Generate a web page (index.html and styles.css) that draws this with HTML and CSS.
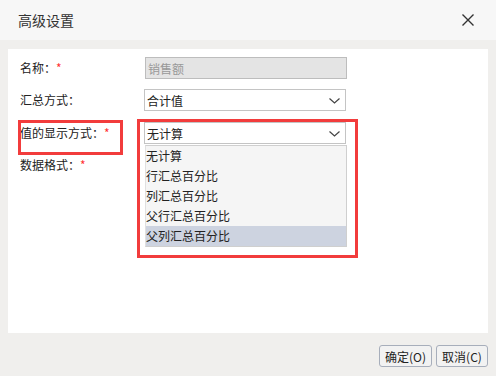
FILE: index.html
```html
<!DOCTYPE html>
<html lang="zh-CN">
<head>
    <meta charset="UTF-8">
    <title>高级设置</title>
    <link rel="stylesheet" href="styles.css">
</head>
<body>
    <div class="dialog">
        <div class="title-bar">
            <span class="title">高级设置</span>
            <svg class="close" width="14" height="14" viewBox="0 0 14 14">
                <path d="M1.5 1.5 L12.5 12.5 M12.5 1.5 L1.5 12.5" stroke="#333" stroke-width="1.4" fill="none"/>
            </svg>
        </div>

        <div class="body">
            <div class="panel">
                <div class="row">
                    <label class="label">名称：<span class="req">*</span></label>
                    <div class="field input disabled">销售额</div>
                </div>
                <div class="row">
                    <label class="label">汇总方式：</label>
                    <div class="field select">
                        <span>合计值</span>
                        <svg class="caret" width="11" height="6" viewBox="0 0 11 6"><path d="M0.5 0.5 L5.5 5 L10.5 0.5" stroke="#444" stroke-width="1.2" fill="none"/></svg>
                    </div>
                </div>
                <div class="row">
                    <label class="label marked">值的显示方式：<span class="req">*</span></label>
                    <div class="combo">
                        <div class="field select">
                            <span>无计算</span>
                            <svg class="caret" width="11" height="6" viewBox="0 0 11 6"><path d="M0.5 0.5 L5.5 5 L10.5 0.5" stroke="#444" stroke-width="1.2" fill="none"/></svg>
                        </div>
                        <ul class="dropdown">
                            <li>无计算</li>
                            <li>行汇总百分比</li>
                            <li>列汇总百分比</li>
                            <li>父行汇总百分比</li>
                            <li class="active">父列汇总百分比</li>
                        </ul>
                    </div>
                </div>
                <div class="row">
                    <label class="label">数据格式：<span class="req">*</span></label>
                </div>
            </div>

            <div class="footer">
                <button class="btn">确定(O)</button>
                <button class="btn">取消(C)</button>
            </div>
        </div>
    </div>
</body>
</html>
```

FILE: styles.css
```css
* { margin: 0; padding: 0; box-sizing: border-box; }
body {
    font-family: "Noto Sans CJK SC", "Noto Sans", sans-serif;
    font-size: 12px;
    color: #222;
    background: #f0efed;
    width: 496px;
    height: 376px;
    overflow: hidden;
}
.title-bar {
    height: 40px;
    background: #f7f7f7;
    display: flex;
    align-items: center;
    justify-content: space-between;
    padding: 0 21px 0 18px;
}
.title {
    font-size: 14px;
    color: #333;
}
.body {
    padding: 9px 8px 0;
}
.panel {
    background: #fff;
    height: 284px;
    padding: 8px 12px;
    display: flex;
    flex-direction: column;
    gap: 10px;
}
.row {
    display: flex;
    align-items: center;
    height: 22px;
}
.row:nth-child(3) { margin-top: 1px; }
.label {
    width: 124px;
    flex: none;
    position: relative;
    line-height: 22px;
}
.req { color: #f33; }
.label.marked::after {
    content: "";
    position: absolute;
    left: -2px;
    top: -2px;
    width: 99px;
    height: 29px;
    border: 3px solid #f23c3c;
}
.field {
    width: 202px;
    height: 22px;
    border: 1px solid #c4c4c4;
    display: flex;
    align-items: center;
    padding-left: 2px;
    background: #fff;
}
.field.disabled {
    background: #e4e4e4;
    border-color: #bdbdbd;
    color: #999;
    margin-left: 1px;
}
.select {
    justify-content: space-between;
    padding-right: 5px;
}
.caret { margin-top: 1px; }
.combo {
    position: relative;
    width: 202px;
}
.combo::after {
    content: "";
    position: absolute;
    left: -7px;
    top: -3px;
    width: 215px;
    height: 133px;
    border: 3px solid #f23c3c;
}
.dropdown {
    position: absolute;
    left: 1px;
    top: 23px;
    width: 202px;
    list-style: none;
    background: #f5f5f5;
    border: 1px solid #cfcfcf;
    border-left-color: #e0e0e0;
}
.dropdown li {
    height: 20px;
    line-height: 20px;
}
.dropdown li.active { background: #cdd3e0; }
.footer {
    display: flex;
    justify-content: flex-end;
    gap: 4px;
    padding-top: 12px;
}
.btn {
    font-family: inherit;
    font-size: 12px;
    color: #222;
    width: 53px;
    height: 22px;
    border: 1px solid #a7aebb;
    border-radius: 3px;
    background: #f2f2f2;
}
.btn + .btn { width: 52px; }
```
